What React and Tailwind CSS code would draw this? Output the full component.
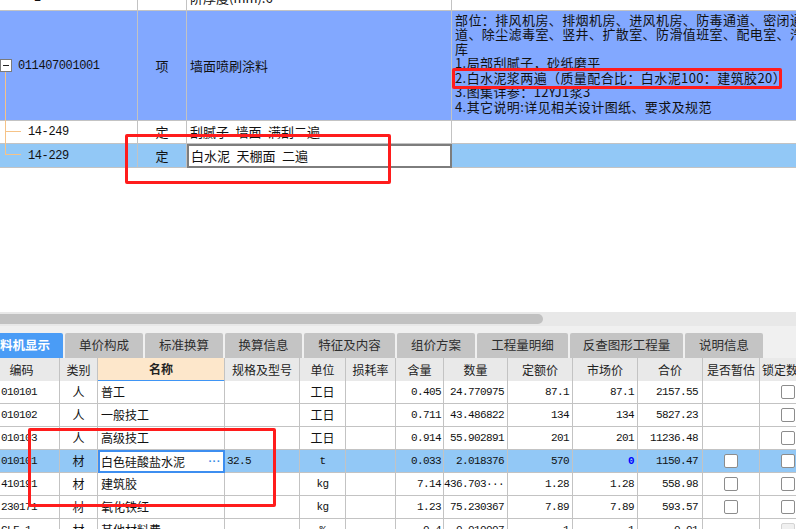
import React from "react";

const MONO = "font-['Liberation_Mono','Noto_Sans_CJK_SC',monospace]";

function TopTable() {
  const c = "border-r border-b border-[#c3c3c3]";
  const tree = "bg-[#f6c387]";
  return (
    <div className="grid grid-cols-[138px_49px_265px_1fr] text-[13px] text-[#111]">
      {/* row 0 (cut off) */}
      <div className={`${c} h-[11px] overflow-hidden`}>
        <div className={`-mt-[12px] h-[20px] leading-[20px] pl-[34px] ${MONO} text-[12px] tracking-[-0.4px]`}>2</div>
      </div>
      <div className={`${c} h-[11px]`} />
      <div className={`${c} h-[11px] overflow-hidden`}>
        <div className="-mt-[12px] h-[20px] leading-[20px] pl-[3px]">阶厚度(mm):6</div>
      </div>
      <div className="border-b border-[#c3c3c3] h-[11px]" />

      {/* row 1 */}
      <div className={`${c} relative h-[110px] bg-[#82a8ff] flex items-center`}>
        <div className="absolute left-0 top-[48px] w-[12px] h-[13px] border border-[#7a7a7a] bg-white flex items-center justify-center">
          <div className="w-[6px] h-px bg-[#222]" />
        </div>
        <div className={`absolute left-[5px] top-[61px] bottom-[-1px] w-px ${tree}`} />
        <span className={`pl-[18px] ${MONO} text-[12px] tracking-[-0.4px]`}>011407001001</span>
      </div>
      <div className={`${c} h-[110px] bg-[#82a8ff] flex items-center justify-center`}>项</div>
      <div className={`${c} h-[110px] bg-[#82a8ff] flex items-center pl-[3px]`}>墙面喷刷涂料</div>
      <div className="border-b border-[#c3c3c3] h-[110px] bg-[#82a8ff] pl-[3px] pt-[1.5px] leading-[14.6px] whitespace-nowrap overflow-hidden tracking-[0.4px]">
        <div>部位：排风机房、排烟机房、进风机房、防毒通道、密闭通</div>
        <div>道、除尘滤毒室、竖井、扩散室、防滑值班室、配电室、汽车</div>
        <div>库</div>
        <div>1.局部刮腻子，砂纸磨平</div>
        <div>2.白水泥浆两遍（质量配合比：白水泥100：建筑胶20）</div>
        <div>3.图集详参：12YJ1浆3</div>
        <div>4.其它说明:详见相关设计图纸、要求及规范</div>
      </div>

      {/* row 2 */}
      <div className={`${c} relative h-[23px] flex items-center`}>
        <div className={`absolute left-[5px] top-0 bottom-[-1px] w-px ${tree}`} />
        <div className={`absolute left-[5px] top-[10px] w-[16px] h-px ${tree}`} />
        <span className={`pl-[28px] ${MONO} text-[12px] tracking-[-0.4px]`}>14-249</span>
      </div>
      <div className={`${c} h-[23px] flex items-center justify-center`}>定</div>
      <div className={`${c} h-[23px] flex items-center pl-[3px] whitespace-pre`}>{"刮腻子\u2002墙面\u2002满刮二遍"}</div>
      <div className="border-b border-[#c3c3c3] h-[23px]" />

      {/* row 3 selected */}
      <div className={`${c} relative h-[24px] bg-[#92c8f6] flex items-center`}>
        <div className={`absolute left-[5px] top-0 h-[10px] w-px ${tree}`} />
        <div className={`absolute left-[5px] top-[10px] w-[16px] h-px ${tree}`} />
        <span className={`pl-[28px] ${MONO} text-[12px] tracking-[-0.4px]`}>14-229</span>
      </div>
      <div className={`${c} h-[24px] bg-[#92c8f6] flex items-center justify-center`}>定</div>
      <div className="h-[24px] border-2 border-[#7d7d7d] bg-white flex items-center pl-[2px] whitespace-pre">{"白水泥\u2002天棚面\u2002二遍"}</div>
      <div className="border-b border-[#c3c3c3] h-[24px] bg-[#92c8f6]" />
    </div>
  );
}

function Scrollbar() {
  return (
    <div className="h-[14px] bg-[#e8e8e8] py-[2px]">
      <div className="h-[10px] w-[543px] bg-[#c1c1c1] rounded-r-full" />
    </div>
  );
}

function Tabs() {
  const tabs = [
    ["单价构成", "w-[78px]"],
    ["标准换算", "w-[78px]"],
    ["换算信息", "w-[77px]"],
    ["特征及内容", "w-[91px]"],
    ["组价方案", "w-[78px]"],
    ["工程量明细", "w-[91px]"],
    ["反查图形工程量", "w-[113px]"],
    ["说明信息", "w-[78px]"],
  ];
  return (
    <div className="h-[32px] bg-[#f0f0f0] pt-[7px] flex gap-[2px] text-[12.5px]">
      <div className="w-[63px] h-[25px] bg-[#4a9cf6] rounded-tr-[2px] flex items-center justify-end pr-[13px] text-white font-bold whitespace-nowrap">
        工料机显示
      </div>
      {tabs.map(([t, w]) => (
        <div key={t} className={`${w} h-[25px] bg-[#c4c4c4] rounded-t-[2px] flex items-center justify-center text-[#2e2e2e] whitespace-nowrap`}>
          {t}
        </div>
      ))}
    </div>
  );
}

function Check({ dim }) {
  return (
    <div className={`w-[14px] h-[14px] rounded-[2px] border ${dim ? "border-[#d4d4d4] bg-[#f0f0f0]" : "border-[#8c8c8c] bg-white"}`} />
  );
}

const rows = [
  { code: "010101", type: "人", name: "普工", spec: "", unit: "工日", qty: "0.405", amt: "24.770975", dp: "87.1", mp: "87.1", total: "2157.55", est: false, lock: true },
  { code: "010102", type: "人", name: "一般技工", spec: "", unit: "工日", qty: "0.711", amt: "43.486822", dp: "134", mp: "134", total: "5827.23", est: false, lock: true },
  { code: "010103", type: "人", name: "高级技工", spec: "", unit: "工日", qty: "0.914", amt: "55.902891", dp: "201", mp: "201", total: "11236.48", est: false, lock: true },
  { code: "010101", type: "材", name: "白色硅酸盐水泥", spec: "32.5", unit: "t", qty: "0.033", amt: "2.018376", dp: "570", mp: "0", total: "1150.47", est: true, lock: true, sel: true },
  { code: "410191", type: "材", name: "建筑胶", spec: "", unit: "kg", qty: "7.14", amt: "436.703···", dp: "1.28", mp: "1.28", total: "558.98", est: true, lock: true },
  { code: "230171", type: "材", name: "氧化铁红", spec: "", unit: "kg", qty: "1.23", amt: "75.230367", dp: "7.89", mp: "7.89", total: "593.57", est: true, lock: true },
  { code: "CLF-1", type: "材", name: "其他材料费", spec: "", unit: "%", qty: "0.4", amt: "0.010007", dp: "1", mp: "1", total: "0.01", est: false, lock: true, dim: true },
];

function BottomTable() {
  const c = "border-r border-b border-[#c3c3c3]";
  const h = `${c} bg-[#e9e9e9] flex items-center justify-center text-[#222]`;
  const num = `${MONO} text-[11px] tracking-[-0.6px]`;
  return (
    <div className="grid grid-cols-[60px_38px_127px_75px_46px_50px_48px_64px_65px_65px_65px_57px_60px] auto-rows-[23px] text-[12px] text-[#111]">
      <div className={`${h} h-[24px] pr-[16px]`}>编码</div>
      <div className={`${h} h-[24px]`}>类别</div>
      <div className="h-[24px] border-r border-[#c3c3c3] bg-[#fde7cb] border-b-2 border-b-[#3f95f5] flex items-center justify-center font-bold text-[#222]">名称</div>
      <div className={`${h} h-[24px]`}>规格及型号</div>
      <div className={`${h} h-[24px]`}>单位</div>
      <div className={`${h} h-[24px]`}>损耗率</div>
      <div className={`${h} h-[24px]`}>含量</div>
      <div className={`${h} h-[24px]`}>数量</div>
      <div className={`${h} h-[24px]`}>定额价</div>
      <div className={`${h} h-[24px]`}>市场价</div>
      <div className={`${h} h-[24px]`}>合价</div>
      <div className={`${h} h-[24px]`}>是否暂估</div>
      <div className={`${c} h-[24px] bg-[#e9e9e9] flex items-center pl-[2px] whitespace-nowrap text-[#222]`}>锁定数量</div>

      {rows.map((r, i) => {
        const bg = r.sel ? "bg-[#92c8f6]" : "bg-white";
        const cell = `${c} ${bg} flex items-center whitespace-nowrap overflow-hidden`;
        return (
          <React.Fragment key={i}>
            <div className={`${cell} pl-[1px] ${num}`}>{r.code}</div>
            <div className={`${cell} justify-center`}>{r.type}</div>
            {r.sel ? (
              <div className="border-2 border-[#3d8ef0] bg-white flex items-center justify-between pl-[1px] pr-[2px]">
                <span>{r.name}</span>
                <span className={`text-[#3a8ee6] font-bold ${MONO} text-[11px] tracking-[-2.5px] pr-[2px] leading-none`}>···</span>
              </div>
            ) : (
              <div className={`${cell} pl-[3px]`}>{r.name}</div>
            )}
            <div className={`${cell} pl-[2px] ${num}`}>{r.spec}</div>
            <div className={`${cell} justify-center ${/^[a-z%]+$/.test(r.unit) ? num : ""}`}>{r.unit}</div>
            <div className={cell} />
            <div className={`${cell} justify-end pr-[2px] ${num}`}>{r.qty}</div>
            <div className={`${cell} justify-end pr-[3px] ${num}`}>{r.amt}</div>
            <div className={`${cell} justify-end pr-[3px] ${num}`}>{r.dp}</div>
            <div className={`${cell} justify-end pr-[3px] ${num}`}>
              {r.sel ? <span className="text-[#0000ff] font-bold">{r.mp}</span> : r.mp}
            </div>
            <div className={`${cell} justify-end pr-[4px] ${num}`}>{r.total}</div>
            <div className={`${cell} justify-center`}>{r.est ? <Check /> : null}</div>
            <div className={`${cell} pl-[21px]`}>{r.lock ? <Check dim={r.dim} /> : null}</div>
          </React.Fragment>
        );
      })}
    </div>
  );
}

export default function App() {
  return (
    <div className="relative w-[796px] h-[529px] overflow-hidden bg-white font-['Noto_Sans_CJK_SC',sans-serif] text-[#111]">
      <TopTable />
      <div className="h-[144px]" />
      <Scrollbar />
      <Tabs />
      <BottomTable />
      <div className="absolute left-[125px] top-[134px] w-[266px] h-[50px] border-[3px] border-[#ff1c1c] rounded-[2px]" />
      <div className="absolute left-[452px] top-[68px] w-[330px] h-[21px] border-[3px] border-[#ff1c1c] rounded-[2px]" />
      <div className="absolute left-[28px] top-[428px] w-[248px] h-[79px] border-[3px] border-[#ff1c1c] rounded-[2px]" />
    </div>
  );
}
